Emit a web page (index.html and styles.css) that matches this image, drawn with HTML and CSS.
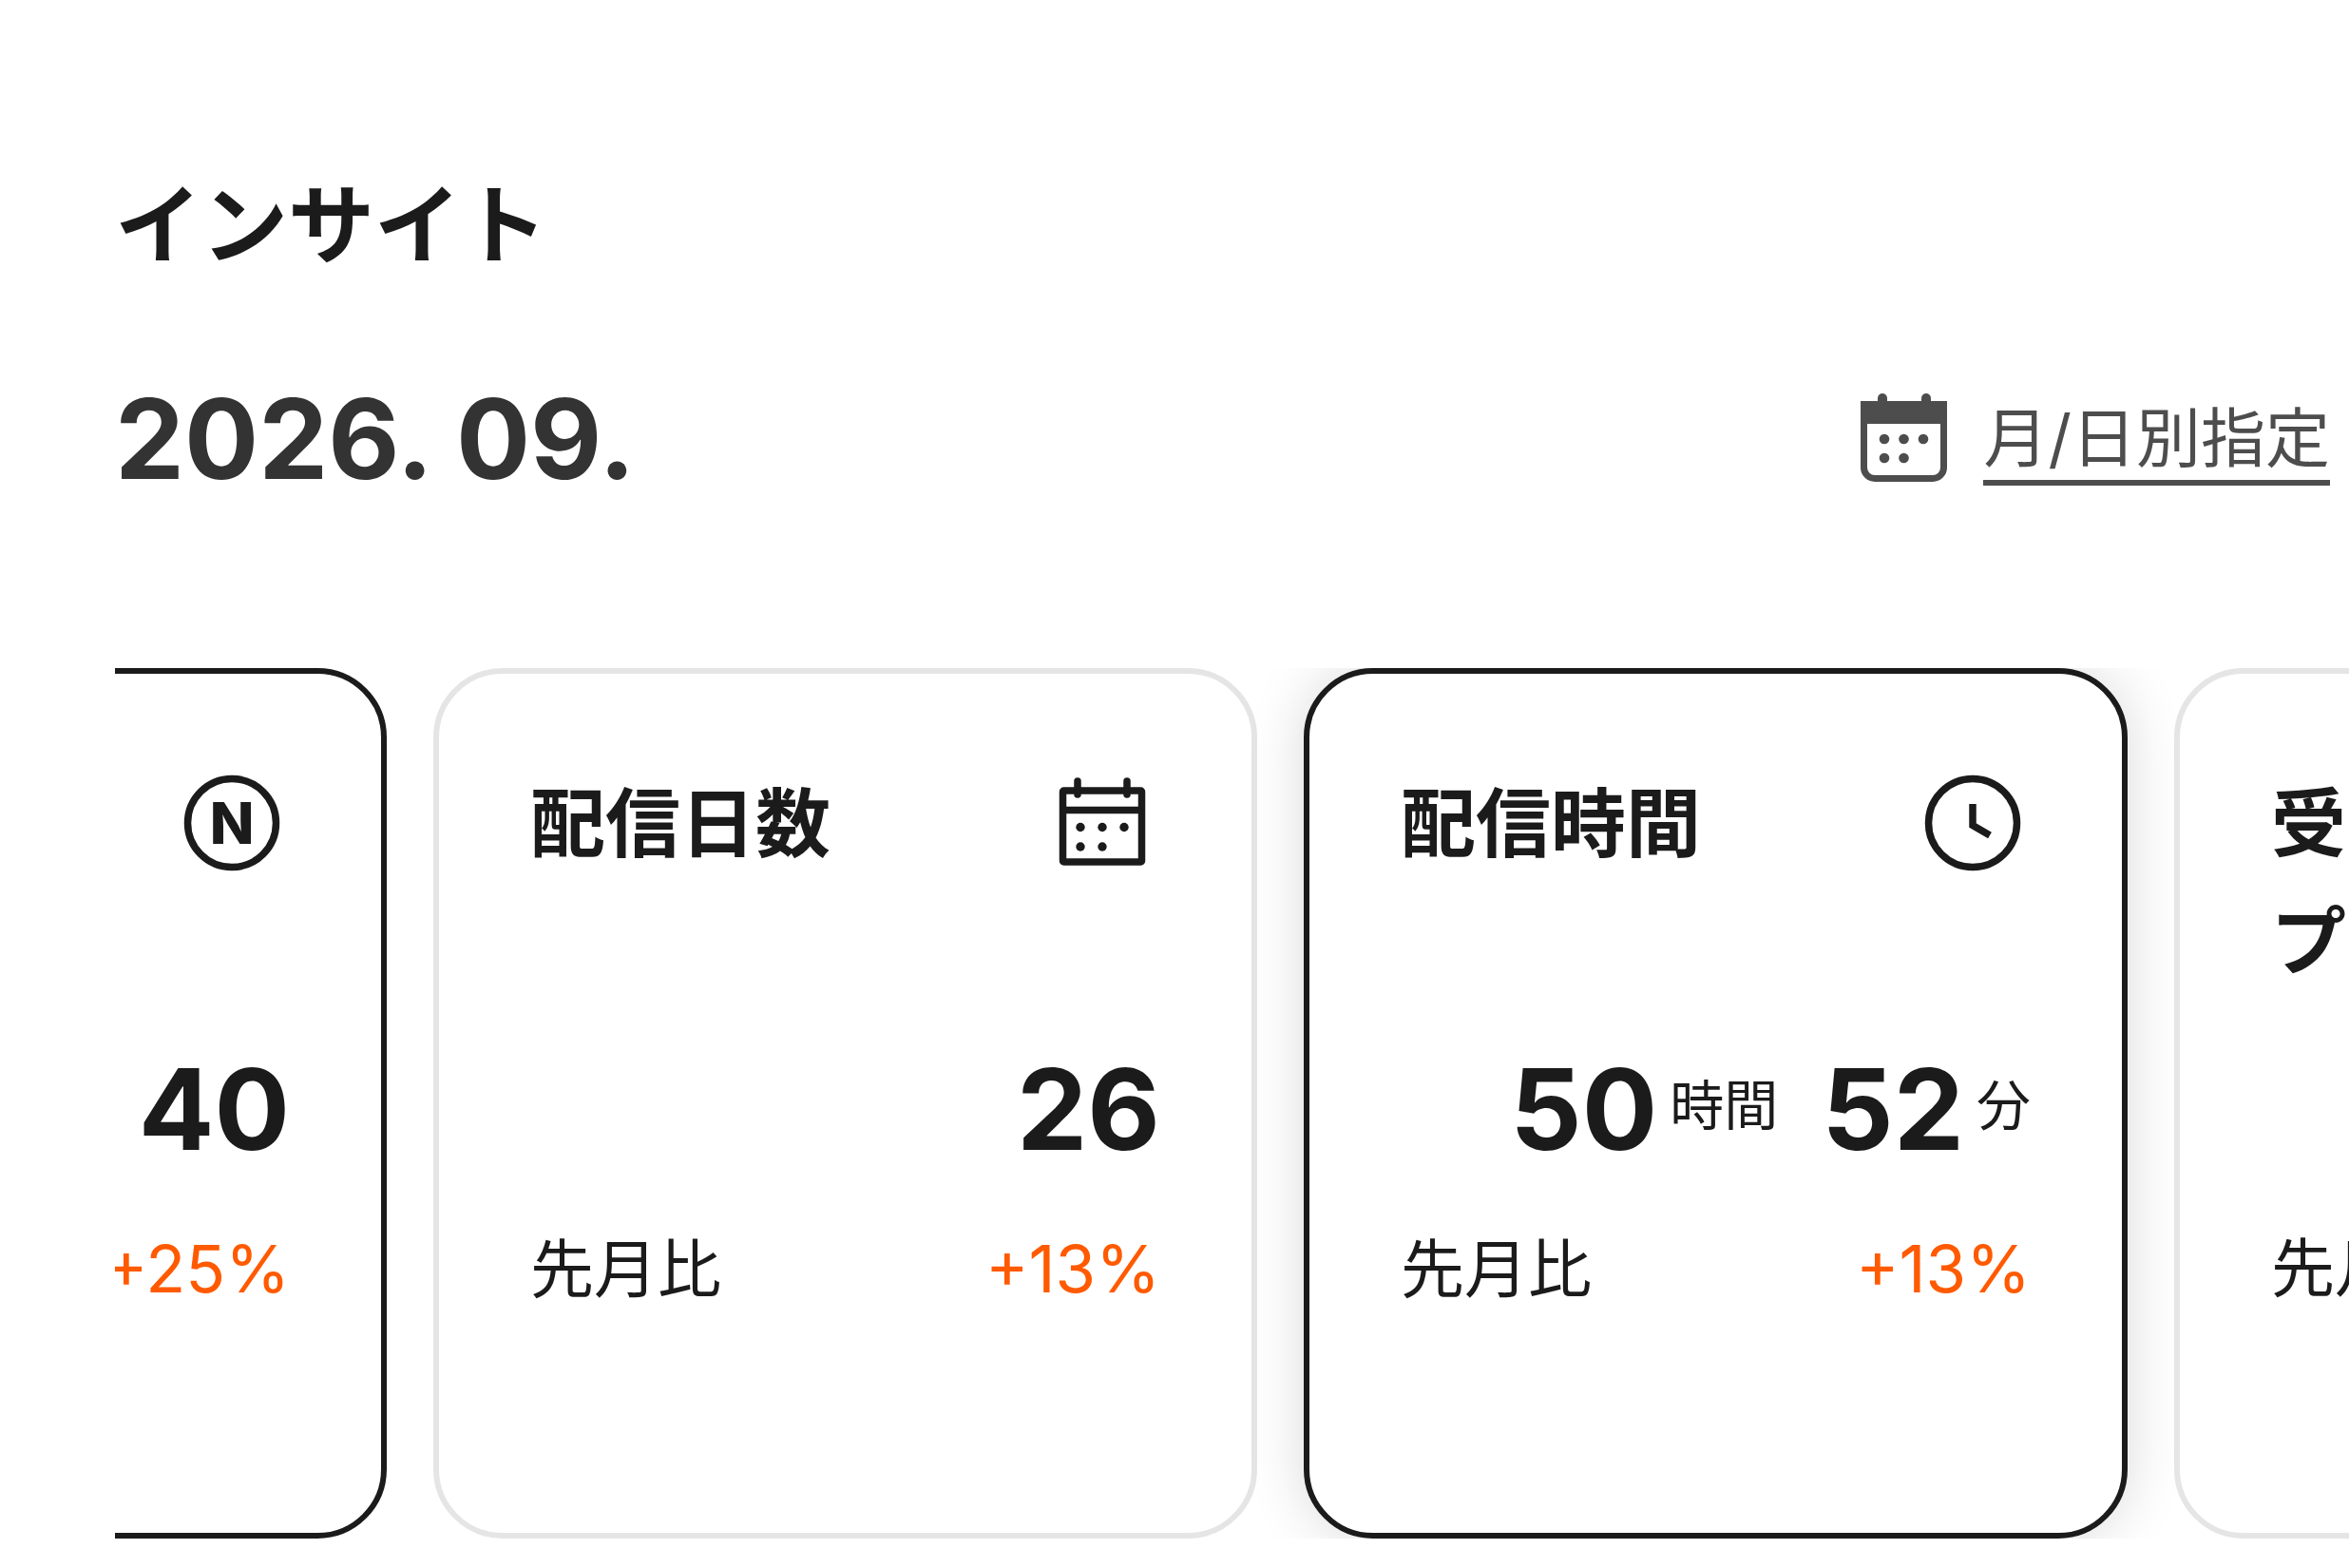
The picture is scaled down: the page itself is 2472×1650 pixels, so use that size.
FILE: index.html
```html
<!DOCTYPE html>
<html lang="ja">
<head>
  <meta charset="utf-8">
  <title>インサイト</title>
  <link rel="stylesheet" href="styles.css">
</head>
<body>
  <main class="insight">
    <h1 class="title">インサイト</h1>

    <div class="period">
      <p class="date">2026. 09.</p>
      <button type="button" class="picker">
        <svg class="picker-icon" viewBox="0 0 98 98" aria-hidden="true">
          <rect x="22" y="1" width="10" height="16" rx="5" fill="currentColor"/>
          <rect x="68" y="1" width="10" height="16" rx="5" fill="currentColor"/>
          <path fill="currentColor" fill-rule="evenodd" d="M4 9h91v70a15 15 0 0 1-15 15H19a15 15 0 0 1-15-15zM11 33v46a8 8 0 0 0 8 8h61a8 8 0 0 0 8-8V33z"/>
          <g fill="currentColor">
            <circle cx="29" cy="49" r="5.3"/>
            <circle cx="49.5" cy="49" r="5.3"/>
            <circle cx="70" cy="49" r="5.3"/>
            <circle cx="29" cy="69" r="5.3"/>
            <circle cx="49.5" cy="69" r="5.3"/>
          </g>
        </svg>
        <span class="picker-text">月/日別指定</span>
      </button>
    </div>

    <div class="slider">
      <ul class="cards">
        <li class="card dark">
          <div class="card-head">
            <svg class="card-icon" viewBox="0 0 122 122" aria-hidden="true">
              <circle cx="61" cy="61" r="46.5" fill="none" stroke="currentColor" stroke-width="7.5"/>
              <text class="card-icon-text" x="61" y="83" text-anchor="middle">N</text>
            </svg>
          </div>
          <p class="value">40</p>
          <p class="compare"><span class="rate">+25%</span></p>
        </li>
        <li class="card">
          <div class="card-head">
            <h2 class="card-title">配信日数</h2>
            <svg class="card-icon" viewBox="0 0 122 122" aria-hidden="true">
              <g fill="none" stroke="currentColor" stroke-width="7.5">
                <rect x="19.5" y="27" width="83" height="75" rx="1"/>
                <path d="M19.5 47.5h83"/>
                <path d="M35 17v14M87 17v14" stroke-linecap="round"/>
              </g>
              <g fill="currentColor">
                <circle cx="38" cy="65.5" r="4.7"/>
                <circle cx="61" cy="65.5" r="4.7"/>
                <circle cx="84" cy="65.5" r="4.7"/>
                <circle cx="38" cy="86" r="4.7"/>
                <circle cx="61" cy="86" r="4.7"/>
              </g>
            </svg>
          </div>
          <p class="value">26</p>
          <p class="compare"><span>先月比</span><span class="rate">+13%</span></p>
        </li>
        <li class="card dark active">
          <div class="card-head">
            <h2 class="card-title">配信時間</h2>
            <svg class="card-icon" viewBox="0 0 122 122" aria-hidden="true">
              <g fill="none" stroke="currentColor" stroke-width="7.5">
                <circle cx="61" cy="61" r="46.5"/>
                <path d="M61 41v22.5l18 10.5"/>
              </g>
            </svg>
          </div>
          <p class="value">50<span class="unit">時間</span> <span class="minute">52</span><span class="unit">分</span></p>
          <p class="compare"><span>先月比</span><span class="rate">+13%</span></p>
        </li>
        <li class="card">
          <div class="card-head">
            <h2 class="card-title">受け取ったアッ<br>プ</h2>
          </div>
          <p class="value"></p>
          <p class="compare"><span>先月比</span></p>
        </li>
      </ul>
    </div>
  </main>
</body>
</html>
```

FILE: styles.css
```css
* {
  box-sizing: border-box;
  margin: 0;
  padding: 0;
}

body {
  background: #fff;
  color: #1b1b1b;
  font-family: Inter, "Noto Sans CJK JP", sans-serif;
}

.insight {
  padding: 167px 0 0 121px;
}

.title {
  font-size: 91px;
  font-weight: 700;
  line-height: 140px;
}

.period {
  display: flex;
  align-items: center;
  justify-content: space-between;
  height: 124px;
  margin-top: 93px;
  padding-right: 20px;
}

.date {
  color: #333;
  font-size: 116px;
  font-weight: 700;
  line-height: 124px;
}

.picker {
  display: flex;
  align-items: center;
  gap: 35px;
  border: 0;
  background: none;
  color: #4d4d4d;
  font-family: inherit;
  cursor: pointer;
}

.picker-icon {
  width: 98px;
  height: 98px;
}

.picker-text {
  padding-top: 4px;
  border-bottom: 6px solid;
  font-size: 68px;
  font-weight: 400;
  line-height: 87px;
}

.slider {
  margin-top: 179px;
  overflow: hidden;
}

/* slid to the second card */
.cards {
  display: flex;
  gap: 49px;
  margin-left: -581px;
  list-style: none;
}

.card {
  flex: none;
  width: 867px;
  padding: 96px;
  border: 6px solid #e5e5e5;
  border-radius: 73px;
  background: #fff;
}

.dark {
  border-color: #1b1b1b;
}

.active {
  box-shadow: 0 0 60px rgba(0, 0, 0, 0.15);
}

.card-head {
  display: flex;
  justify-content: space-between;
  height: 268px;
}

.card-title {
  font-size: 79px;
  font-weight: 700;
  line-height: 124px;
  white-space: nowrap;
}

.card-icon {
  width: 122px;
  height: 122px;
  margin-left: auto;
}

.card-icon-text {
  fill: currentColor;
  font-size: 61px;
  font-weight: 800;
}

.value {
  display: flex;
  align-items: center;
  justify-content: flex-end;
  height: 188px;
  font-size: 118px;
  font-weight: 700;
}

.unit {
  margin-left: 13px;
  padding-bottom: 16px;
  font-size: 57px;
  font-weight: 400;
}

.minute {
  margin-left: 46px;
}

.compare {
  display: flex;
  align-items: baseline;
  justify-content: space-between;
  height: 256px;
  padding-top: 24px;
  font-size: 67px;
  font-weight: 400;
  line-height: 100px;
}

.rate {
  margin-left: auto;
  color: #ff5a00;
  font-size: 69px;
}
```
